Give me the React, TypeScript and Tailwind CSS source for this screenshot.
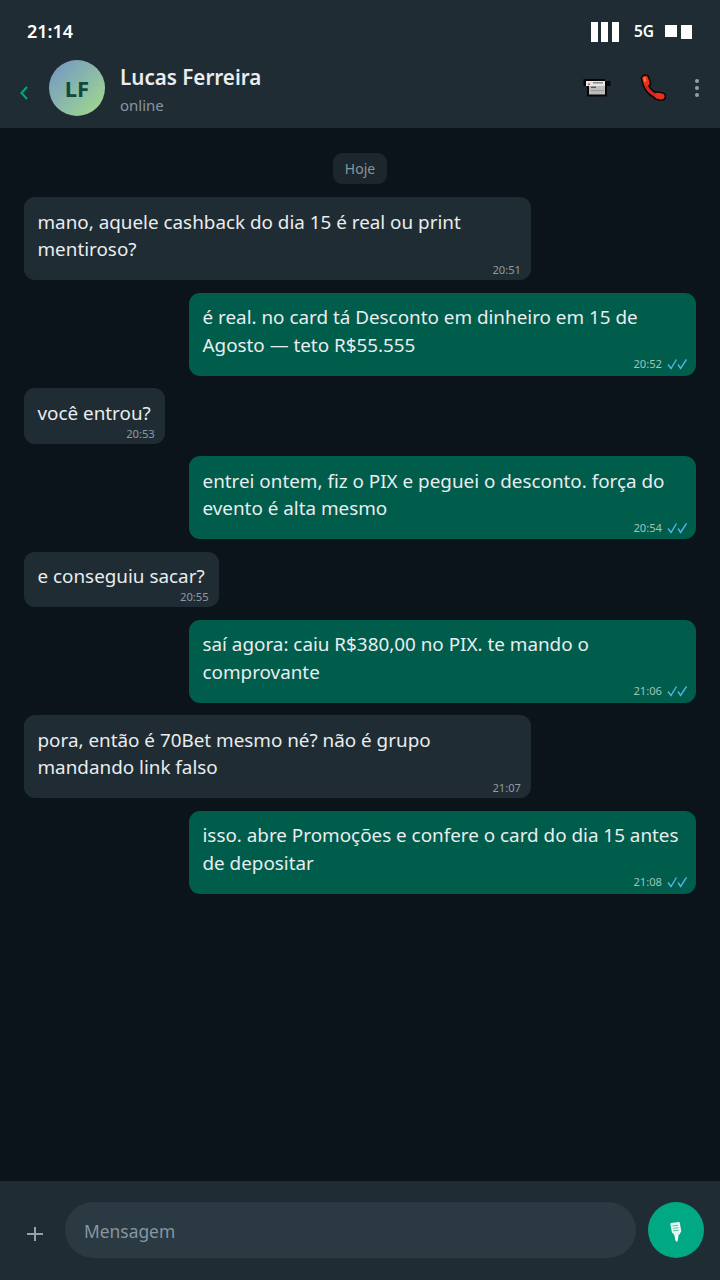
const F = "font-['Noto_Sans','Open_Sans',sans-serif]";

type Msg = { side: "in" | "out"; text: string; time: string };
const msgs: Msg[] = [
  { side: "in", text: "mano, aquele cashback do dia 15 é real ou print mentiroso?", time: "20:51" },
  { side: "out", text: "é real. no card tá Desconto em dinheiro em 15 de Agosto — teto R$55.555", time: "20:52" },
  { side: "in", text: "você entrou?", time: "20:53" },
  { side: "out", text: "entrei ontem, fiz o PIX e peguei o desconto. força do evento é alta mesmo", time: "20:54" },
  { side: "in", text: "e conseguiu sacar?", time: "20:55" },
  { side: "out", text: "saí agora: caiu R$380,00 no PIX. te mando o comprovante", time: "21:06" },
  { side: "in", text: "pora, então é 70Bet mesmo né? não é grupo mandando link falso", time: "21:07" },
  { side: "out", text: "isso. abre Promoções e confere o card do dia 15 antes de depositar", time: "21:08" },
];

function Ticks() {
  return (
    <svg width="20" height="12" viewBox="0 0 20 12" fill="none" stroke="#4fb6e6" strokeWidth="1.4" className="ml-[5px]">
      <path d="M1 6.5 L4 10.5 L9.5 1.5" />
      <path d="M11 6.5 L13.6 10.5 L19.5 1.5" />
    </svg>
  );
}

function Bubble({ m }: { m: Msg }) {
  const out = m.side === "out";
  return (
    <div className={out ? "flex justify-end" : "flex justify-start"}>
      <div className={`max-w-[507px] rounded-[11px] pl-[13.5px] pt-[11.5px] ${out ? "w-[507px] pr-[9px] pb-[5.5px] bg-[#005c4b]" : "pr-[10px] pb-[4px] bg-[#202c33]"} text-[#e9edef]`}>
        <div className="text-[18.85px] leading-[27.5px] pr-[4px]">{m.text}</div>
        <div className={`flex items-center justify-end h-[12px] text-[11.2px] leading-[12px] ${out ? "-mt-[1px] text-[#9fc4ba]" : "mt-[0.5px] text-[#8e9ba3]"}`}>
          <span>{m.time}</span>
          {out && <Ticks />}
        </div>
      </div>
    </div>
  );
}

function VideoIcon() {
  return (
    <svg width="28" height="20" viewBox="0 0 28 20" className="ml-[1px]">
      <path d="M0.5 1 H22 V3 H27.5 V8 H24 V18.5 H4 V8 H0.5 Z" fill="#070707" />
      <rect x="3" y="3" width="19" height="5" fill="#e6e6e6" />
      <rect x="6" y="8" width="16" height="8.5" fill="#bcbcbc" />
      <rect x="10" y="4" width="10" height="1.6" fill="#8f8f8f" />
      <rect x="8" y="8.6" width="5" height="1.4" fill="#555555" />
      <rect x="5" y="5.4" width="2" height="1.6" fill="#c46060" />
      <rect x="8" y="12" width="13" height="1" fill="#9a9a9a" />
    </svg>
  );
}

function PhoneIcon() {
  return (
    <svg width="26" height="28" viewBox="0 0 26 28" fill="none" strokeLinecap="round">
      <path d="M5.5 5.5 C4.5 13 11 22 21.5 22.5" stroke="#070707" strokeWidth="6.5" />
      <path d="M5.3 4.8 L6.8 9.5" stroke="#070707" strokeWidth="9" />
      <path d="M17.5 21.8 L21.8 22.6" stroke="#070707" strokeWidth="9" />
      <path d="M5.5 5.5 C4.5 13 11 22 21.5 22.5" stroke="#d8241a" strokeWidth="3.4" />
      <path d="M5.3 4.8 L6.6 9" stroke="#e8301c" strokeWidth="6" />
      <path d="M17.8 21.8 L21.6 22.5" stroke="#e8301c" strokeWidth="6" />
      <path d="M4.6 4.2 L5.2 6.6" stroke="#ff7a2a" strokeWidth="2.4" />
    </svg>
  );
}

function MicIcon() {
  return (
    <svg width="14" height="20" viewBox="0 0 14 20" className="mt-[3px]">
      <g transform="rotate(-7 7 7)">
        <path d="M2 1.5 Q2 0.5 3 0.5 H10.5 Q11.5 0.5 11.5 1.5 L12 10 L9.5 13 H5 L2.5 10 Z" fill="#e6f7f1" />
        <path d="M4 3.5 H9.5 M4 6 H9.5 M4 8.5 H9.5" stroke="#5dbfa4" strokeWidth="1" />
      </g>
      <path d="M5.4 13 H9.6 L9 17 L8.4 19.6 H7 L6 17 Z" fill="#ffffff" />
    </svg>
  );
}

export default function App() {
  return (
    <div className={`${F} w-[720px] h-[1280px] flex flex-col bg-[#0b141a] text-[#e9edef]`}>
      <header className="h-[128px] shrink-0 bg-[#202c33] flex flex-col">
        <div className="h-[60px] pt-[20px] pl-[27px] pr-[28px] flex items-start justify-between">
          <span className="-mt-[1px] text-[18px] leading-[24px] font-semibold text-white">21:14</span>
          <div className="flex items-center h-[22px]">
            <div className="flex gap-[3.5px] h-[20px] mt-[2px]">
              <div className="w-[7px] bg-white" />
              <div className="w-[7px] bg-white" />
              <div className="w-[7px] bg-white" />
            </div>
            <span className="ml-[15px] text-[15.5px] leading-[20px] font-semibold text-white">5G</span>
            <div className="ml-[11px] flex items-start gap-[4px] mt-[1px]">
              <div className="w-[12px] h-[12px] bg-white" />
              <div className="w-[11px] h-[14px] bg-white" />
            </div>
          </div>
        </div>
        <div className="flex items-center h-[56px]">
          <svg width="10" height="16" viewBox="0 0 10 16" className="ml-[19px] mt-[10px]" fill="none" stroke="#00a884" strokeWidth="2">
            <path d="M8 2 L2.5 8 L8 14" />
          </svg>
          <div className="ml-[20px] w-[56px] h-[56px] rounded-full bg-gradient-to-br from-[#7393c4] to-[#a5dc86] flex items-center justify-center text-[#0f4a3a] text-[22px] font-bold">
            LF
          </div>
          <div className="ml-[15px] flex flex-col mt-[3px]">
            <span className="text-[20.6px] leading-[30px] font-semibold text-[#e9edef]">Lucas Ferreira</span>
            <span className="mt-[1px] text-[15px] leading-[24px] text-[#8696a0]">online</span>
          </div>
          <div className="ml-auto flex items-center">
            <VideoIcon />
            <div className="ml-[29px]"><PhoneIcon /></div>
            <div className="ml-[29px] mr-[21px] flex flex-col gap-[3px]">
              <div className="w-[4px] h-[4px] rounded-full bg-[#8fa0aa]" />
              <div className="w-[4px] h-[4px] rounded-full bg-[#8fa0aa]" />
              <div className="w-[4px] h-[4px] rounded-full bg-[#8fa0aa]" />
            </div>
          </div>
        </div>
      </header>

      <main className="flex-1 px-[24px] pt-[25px] flex flex-col gap-[12.5px]">
        <div className="flex justify-center mb-[0.9px]">
          <span className="h-[31px] px-[12px] rounded-[9px] bg-[#1b262d] text-[#8696a0] text-[14px] leading-[31px]">Hoje</span>
        </div>
        {msgs.map((m) => (
          <Bubble key={m.time} m={m} />
        ))}
      </main>

      <footer className="h-[99px] shrink-0 bg-[#202c33] flex items-start pt-[21px]">
        <svg width="16" height="14" viewBox="0 0 16 14" className="ml-[27px] mt-[25px]" stroke="#8fa3ae" strokeWidth="2">
          <path d="M8 0 V14 M0 7 H16" />
        </svg>
        <div className="ml-[22px] w-[571px] h-[56px] pt-[2px] rounded-[28px] bg-[#2a3942] flex items-center pl-[19px] text-[17.4px] text-[#8696a0]">
          Mensagem
        </div>
        <div className="ml-[12px] w-[56px] h-[56px] rounded-full bg-[#00a884] flex items-center justify-center">
          <MicIcon />
        </div>
      </footer>
    </div>
  );
}
